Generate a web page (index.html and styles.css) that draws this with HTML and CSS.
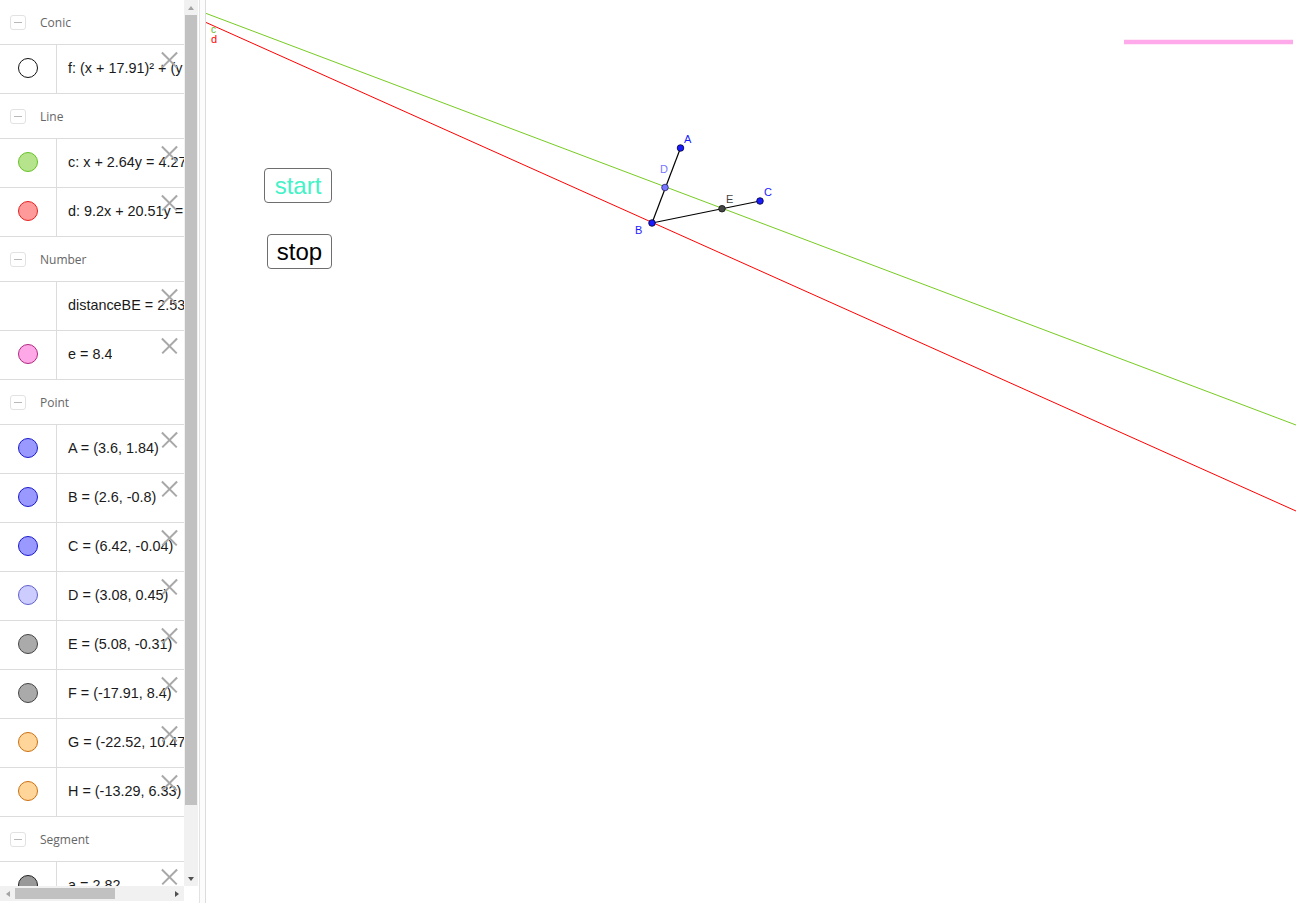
FILE: index.html
```html
<!DOCTYPE html>
<html>
<head>
<meta charset="utf-8">
<link rel="stylesheet" href="styles.css">
</head>
<body>
<div class="app">
  <div class="sidebar">
    <div class="sidebar-main">
      <div class="list">
        <div class="group"><span class="minus"></span><span class="group-name">Conic</span></div>
        <div class="item"><div class="marble"><span class="dot dot-f"></span></div><div class="value">f: (x + 17.91)² + (y - 8.4)² = 70.56</div><span class="close"></span></div>

        <div class="group"><span class="minus"></span><span class="group-name">Line</span></div>
        <div class="item"><div class="marble"><span class="dot dot-c"></span></div><div class="value">c: x + 2.64y = 4.27</div><span class="close"></span></div>
        <div class="item"><div class="marble"><span class="dot dot-d"></span></div><div class="value">d: 9.2x + 20.51y = 7.49</div><span class="close"></span></div>

        <div class="group"><span class="minus"></span><span class="group-name">Number</span></div>
        <div class="item"><div class="marble"></div><div class="value">distanceBE = 2.53</div><span class="close"></span></div>
        <div class="item"><div class="marble"><span class="dot dot-e"></span></div><div class="value">e = 8.4</div><span class="close"></span></div>

        <div class="group"><span class="minus"></span><span class="group-name">Point</span></div>
        <div class="item"><div class="marble"><span class="dot dot-blue"></span></div><div class="value">A = (3.6, 1.84)</div><span class="close"></span></div>
        <div class="item"><div class="marble"><span class="dot dot-blue"></span></div><div class="value">B = (2.6, -0.8)</div><span class="close"></span></div>
        <div class="item"><div class="marble"><span class="dot dot-blue"></span></div><div class="value">C = (6.42, -0.04)</div><span class="close"></span></div>
        <div class="item"><div class="marble"><span class="dot dot-light"></span></div><div class="value">D = (3.08, 0.45)</div><span class="close"></span></div>
        <div class="item"><div class="marble"><span class="dot dot-gray"></span></div><div class="value">E = (5.08, -0.31)</div><span class="close"></span></div>
        <div class="item"><div class="marble"><span class="dot dot-gray"></span></div><div class="value">F = (-17.91, 8.4)</div><span class="close"></span></div>
        <div class="item"><div class="marble"><span class="dot dot-orange"></span></div><div class="value">G = (-22.52, 10.47)</div><span class="close"></span></div>
        <div class="item"><div class="marble"><span class="dot dot-orange"></span></div><div class="value">H = (-13.29, 6.33)</div><span class="close"></span></div>

        <div class="group"><span class="minus"></span><span class="group-name">Segment</span></div>
        <div class="item"><div class="marble"><span class="dot dot-seg"></span></div><div class="value">a = 2.82</div><span class="close"></span></div>
      </div>
      <div class="vscroll">
        <div class="sb-btn"><span class="tri-up"></span></div>
        <div class="vthumb"></div>
        <div class="sb-fill"></div>
        <div class="sb-btn"><span class="tri-down"></span></div>
      </div>
    </div>
    <div class="sidebar-bottom">
      <div class="hscroll">
        <div class="sb-hbtn"><span class="tri-left"></span></div>
        <div class="hthumb"></div>
        <div class="sb-fill"></div>
        <div class="sb-hbtn"><span class="tri-right"></span></div>
      </div>
      <div class="corner"></div>
    </div>
  </div>
  <div class="splitter"></div>
  <div class="canvas">
    <svg class="graph" viewBox="206 0 1090 903" width="1090" height="903">
      <line x1="205" y1="13" x2="1296" y2="425" stroke="#77cc22" stroke-width="1"/>
      <line x1="205" y1="22" x2="1296" y2="511" stroke="#ff0000" stroke-width="1"/>
      <text x="211" y="33" fill="#66bb22" font-size="10">c</text>
      <text x="211" y="43" fill="#ff0000" font-size="11">d</text>
      <line x1="1124" y1="42" x2="1293" y2="42" stroke="#ffaaea" stroke-width="4.5"/>
      <line x1="680.5" y1="148" x2="652" y2="223" stroke="#000" stroke-width="1.2"/>
      <line x1="652" y1="223" x2="760" y2="201" stroke="#000" stroke-width="1.2"/>
      <circle cx="680.5" cy="148" r="3.3" fill="#1a1aff" stroke="#000033" stroke-width="0.8"/>
      <circle cx="665" cy="187.5" r="3.3" fill="#7777ff" stroke="#222266" stroke-width="0.8"/>
      <circle cx="652" cy="223" r="3.3" fill="#1a1aff" stroke="#000033" stroke-width="0.8"/>
      <circle cx="722" cy="208.7" r="3.3" fill="#444444" stroke="#111" stroke-width="0.8"/>
      <circle cx="760" cy="201" r="3.3" fill="#1a1aff" stroke="#000033" stroke-width="0.8"/>
      <text x="684" y="143" fill="#1a1aff" font-size="11">A</text>
      <text x="660" y="173" fill="#7777ff" font-size="11">D</text>
      <text x="635" y="234" fill="#1a1aff" font-size="11">B</text>
      <text x="726" y="203" fill="#444444" font-size="11">E</text>
      <text x="764" y="196" fill="#1a1aff" font-size="11">C</text>
    </svg>
    <div class="btn btn-start">start</div>
    <div class="btn btn-stop">stop</div>
  </div>
</div>
</body>
</html>
```

FILE: styles.css
```css
* { box-sizing: border-box; }
html, body { margin: 0; padding: 0; background: #fff; }
body { font-family: "Liberation Sans", Arial, sans-serif; overflow: hidden; }

.app { display: flex; width: 1296px; height: 903px; }

.sidebar { width: 198px; display: flex; flex-direction: column; height: 903px; }
.sidebar-main { flex: 1; display: flex; overflow: hidden; }
.list { width: 184px; overflow: hidden; }

.group {
  height: 45px;
  border-bottom: 1px solid #dcdcdc;
  display: flex;
  align-items: center;
  padding-left: 10px;
  padding-top: 1px;
}
.minus {
  width: 16px; height: 15px;
  border: 1px solid #e2e2e2;
  border-radius: 3px;
  position: relative;
}
.minus::after {
  content: "";
  position: absolute;
  left: 3px; top: 6px;
  width: 8px; height: 1px;
  background: #b8b8b8;
}
.group-name { margin-left: 14px; font-size: 12px; color: #666; font-family: "Open Sans", "Liberation Sans", sans-serif; }

.item {
  height: 49px;
  border-bottom: 1px solid #dcdcdc;
  display: flex;
  position: relative;
}
.marble {
  width: 57px;
  border-right: 1px solid #dcdcdc;
  display: flex;
  align-items: center;
  justify-content: center;
  flex-shrink: 0;
}
.dot {
  width: 20px; height: 20px;
  border-radius: 50%;
  border: 1px solid #000;
  margin-top: -2px;
}
.dot-f { background: #fff; border-color: #111; }
.dot-c { background: #b5e48c; border-color: #66c225; }
.dot-d { background: #ff9a9a; border-color: #e62020; }
.dot-e { background: #ffa8e8; border-color: #b0287e; }
.dot-blue { background: #9999ff; border-color: #1a1acc; }
.dot-light { background: #ccccff; border-color: #6060cc; }
.dot-gray { background: #aaaaaa; border-color: #444; }
.dot-orange { background: #ffd599; border-color: #cc7010; }
.dot-seg { background: #999; border-color: #222; }

.value {
  padding-left: 11px;
  padding-bottom: 3px;
  display: flex;
  align-items: center;
  font-size: 14.4px;
  color: #1a1a1a;
  white-space: nowrap;
  overflow: hidden;
}
.close {
  position: absolute;
  left: 161px; top: 6px;
  width: 17px; height: 17px;
}
.close::before, .close::after {
  content: "";
  position: absolute;
  left: -2px; top: 8px;
  width: 21px; height: 1.5px;
  background: #a8a8a8;
  transform: rotate(45deg);
}
.close::after { transform: rotate(-45deg); }

.vscroll {
  width: 14px;
  background: #f1f1f1;
  display: flex;
  flex-direction: column;
}
.sb-btn { height: 15px; display: flex; align-items: center; justify-content: center; }
.vthumb { height: 790px; margin: 0 1px 0 1px; background: #c1c1c1; }
.sb-fill { flex: 1; }
.tri-up { width: 0; height: 0; border-left: 3.5px solid transparent; border-right: 3.5px solid transparent; border-bottom: 4px solid #a3a3a3; }
.tri-down { width: 0; height: 0; border-left: 3.5px solid transparent; border-right: 3.5px solid transparent; border-top: 4px solid #505050; }

.sidebar-bottom { height: 15px; margin-bottom: 2px; display: flex; }
.hscroll { width: 184px; background: #f1f1f1; display: flex; }
.sb-hbtn { width: 15px; display: flex; align-items: center; justify-content: center; }
.hthumb { width: 100px; margin: 2px 0; background: #c1c1c1; }
.tri-left { width: 0; height: 0; border-top: 3.5px solid transparent; border-bottom: 3.5px solid transparent; border-right: 4px solid #a3a3a3; }
.tri-right { width: 0; height: 0; border-top: 3.5px solid transparent; border-bottom: 3.5px solid transparent; border-left: 4px solid #505050; }
.corner { flex: 1; background: #fff; }

.splitter {
  width: 7px;
  border-left: 1px solid #e2e2e2;
  border-right: 1px solid #dcdcdc;
  margin-left: 1px;
  background: #fcfcfc;
}
.canvas { flex: 1; position: relative; overflow: hidden; }
.graph { display: block; font-family: "Liberation Sans", Arial, sans-serif; }

.btn {
  position: absolute;
  height: 35px;
  border: 1.5px solid #6e6e6e;
  border-radius: 4px;
  background: #fff;
  font-size: 24px;
  display: flex;
  align-items: center;
  justify-content: center;
}
.btn-start { left: 58px; top: 168px; width: 68px; color: #44f2c8; }
.btn-stop { left: 61px; top: 234px; width: 65px; color: #000; }
```
